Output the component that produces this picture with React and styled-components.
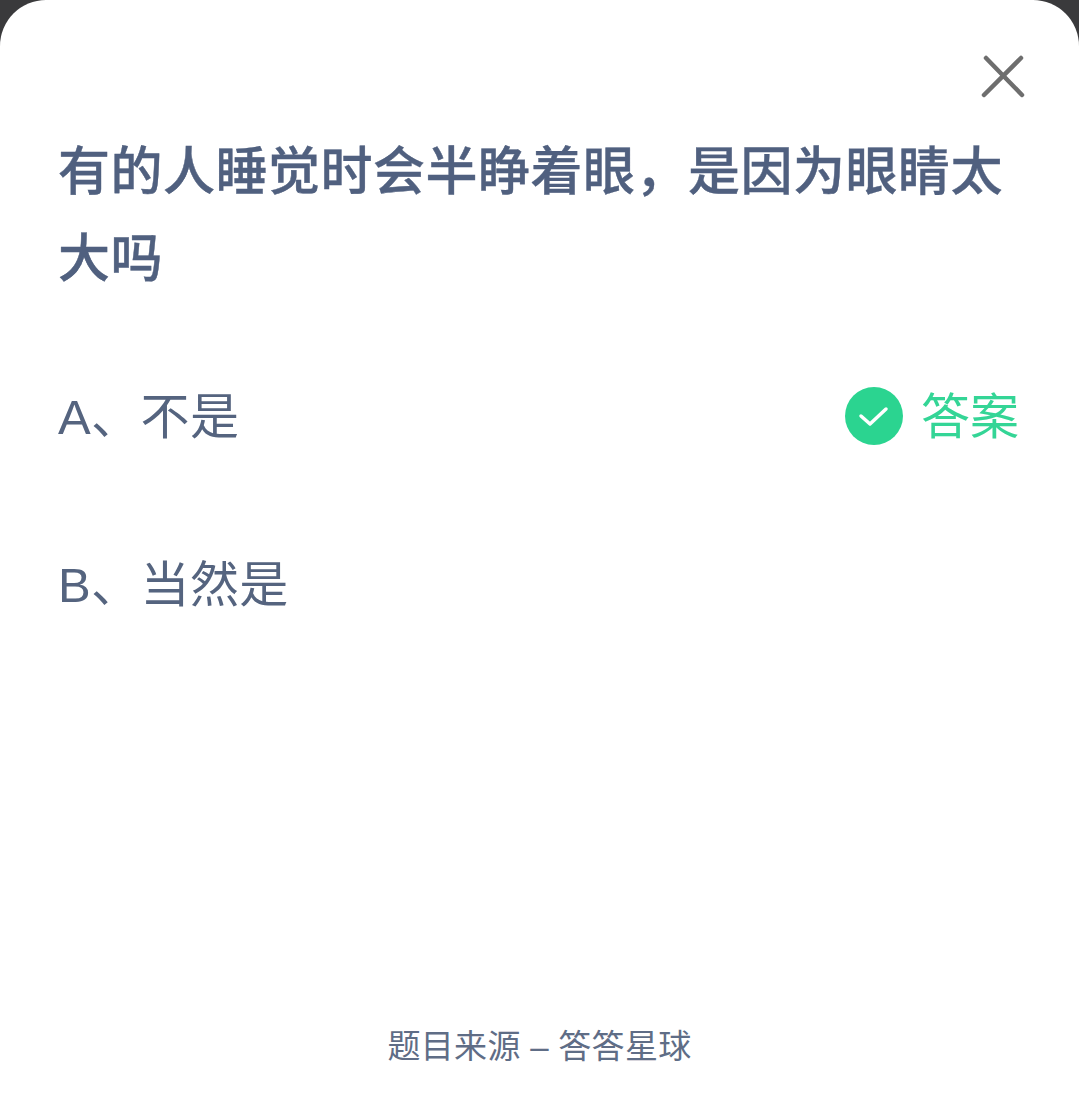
import React from "react";
import styled, { createGlobalStyle } from "styled-components";

const Global = createGlobalStyle`
  html, body { margin: 0; padding: 0; background: #3a3a3c; }
  body { font-family: "Liberation Sans", "Noto Sans CJK SC", sans-serif; }
`;

const Sheet = styled.div`
  position: relative;
  width: 1079px;
  height: 1097px;
  box-sizing: border-box;
  background: #fff;
  border-radius: 46px 46px 0 0;
  padding: 129px 58px 0 58px;
  display: flex;
  flex-direction: column;
  overflow: hidden;
`;

const CloseButton = styled.button`
  position: absolute;
  top: 52px;
  right: 51px;
  width: 48px;
  height: 48px;
  padding: 0;
  border: 0;
  background: none;
  color: #6e6e6e;
`;

const Question = styled.h1`
  margin: 0;
  font-size: 52px;
  line-height: 87px;
  font-weight: 500;
  color: #50607f;
  letter-spacing: 0.5px;
  -webkit-text-stroke: 0.4px #50607f;
`;

const Options = styled.div`
  display: flex;
  flex-direction: column;
  margin-top: 71px;
  gap: 84px;
`;

const Option = styled.div`
  display: flex;
  align-items: center;
  justify-content: space-between;
  height: 84px;
`;

const OptionText = styled.span`
  font-size: 49px;
  font-weight: 400;
  letter-spacing: 0.4px;
  color: #55647f;
  margin-bottom: 8px;
`;

const Answer = styled.div`
  display: flex;
  align-items: center;
  gap: 18px;
  margin-right: 2px;
  font-size: 49px;
  color: #34d596;
`;

const AnswerLabel = styled.span`
  margin-bottom: 7px;
`;

const Badge = styled.span`
  width: 58px;
  height: 58px;
  border-radius: 50%;
  background: #2bd490;
  display: flex;
  align-items: center;
  justify-content: center;
`;

const Source = styled.div`
  margin-top: auto;
  margin-bottom: 27px;
  text-align: center;
  font-size: 33px;
  line-height: 46px;
  letter-spacing: 0.3px;
  color: #5f6d86;
`;

export default function App() {
  return (
    <>
      <Global />
      <Sheet>
        <CloseButton aria-label="关闭">
          <svg width="48" height="48" viewBox="0 0 48 48" fill="none" stroke="currentColor" strokeWidth="4.5" strokeLinecap="round">
            <path d="M4 43 L41 6" />
            <path d="M42 43 L6 6" />
          </svg>
        </CloseButton>
        <Question>有的人睡觉时会半睁着眼，是因为眼睛太大吗</Question>
        <Options>
          <Option>
            <OptionText>A、不是</OptionText>
            <Answer>
              <Badge>
                <svg width="34" height="28" viewBox="0 0 34 28" fill="none" stroke="#fff" strokeWidth="3.5" strokeLinecap="round" strokeLinejoin="round">
                  <path d="M4 14 L13 22 L29 7" />
                </svg>
              </Badge>
              <AnswerLabel>答案</AnswerLabel>
            </Answer>
          </Option>
          <Option>
            <OptionText>B、当然是</OptionText>
          </Option>
        </Options>
        <Source>题目来源 – 答答星球</Source>
      </Sheet>
    </>
  );
}
